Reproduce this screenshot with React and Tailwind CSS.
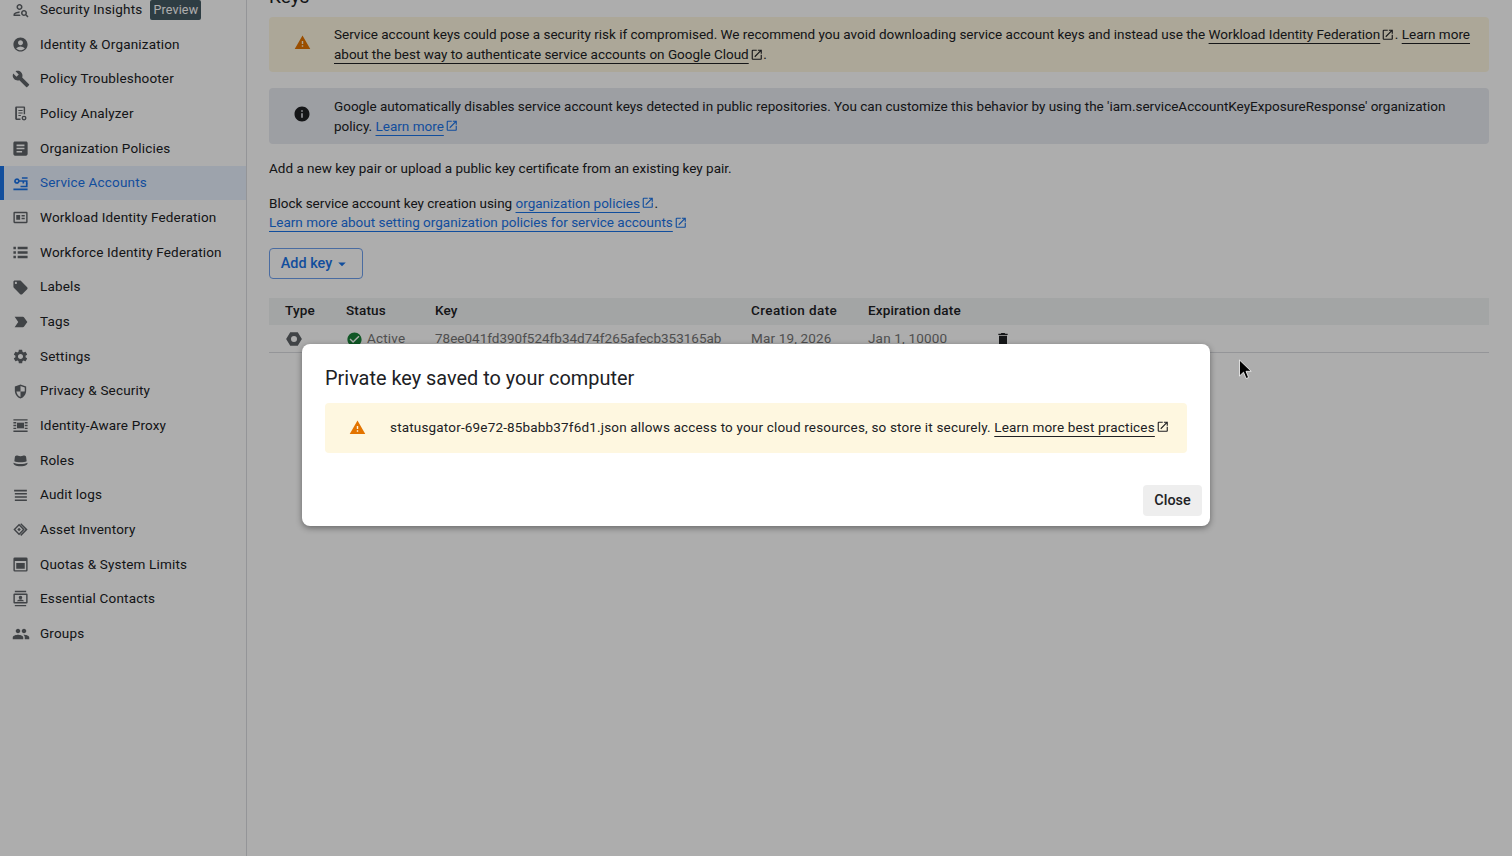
import {
  MdAccountCircle, MdBuild, MdArticle, MdLocalOffer, MdLabelImportant, MdSettings,
  MdGroup, MdWarning, MdInfo, MdOpenInNew, MdDelete, MdCheckCircle, MdArrowDropDown, MdOutlinePersonSearch,
} from 'react-icons/md'

const Svg = ({ children, className = '' }) => (
  <svg viewBox="0 0 24 24" fill="currentColor" className={className}>{children}</svg>
)

const PolicyAnalyzerIcon = (p) => (
  <Svg {...p}>
    <path d="M6 2h11a1.5 1.5 0 0 1 1.5 1.5V13h-2V4H7v15h5v2H6a1.5 1.5 0 0 1-1.5-1.5v-16A1.5 1.5 0 0 1 6 2z" />
    <path d="M9 7h6v1.6H9zM9 10.5h6v1.6H9zM9 14h3.5v1.6H9z" />
    <path d="M17 15a3.5 3.5 0 1 0 0 7 3.5 3.5 0 0 0 0-7zm0 2a1.5 1.5 0 1 1 0 3 1.5 1.5 0 0 1 0-3z" />
  </Svg>
)
const ServiceAccountsIcon = (p) => (
  <Svg {...p}>
    <path d="M7 4.500a4 4 0 0 1 3.800 2.800H22v5.700h-2.400v-3.300h-2.400v2.300h-2.400v-2.300h-4A4 4 0 1 1 7 4.500zm0 2.400a1.600 1.600 0 1 0 0 3.200 1.600 1.600 0 0 0 0-3.200z" />
    <path d="M14 3h8v2.400h-8zM19.600 12H22v5.400H12V15h7.600zM2 19h20v2.600H2z" />
  </Svg>
)
const WorkloadIcon = (p) => (
  <Svg {...p}>
    <path fillRule="evenodd" d="M3.500 4h17A1.500 1.500 0 0 1 22 5.500v13a1.500 1.500 0 0 1-1.500 1.500h-17A1.500 1.500 0 0 1 2 18.500v-13A1.500 1.500 0 0 1 3.500 4zM4 6v12h16V6z" />
    <path d="M6 8.500h5.500V15H6zM13.500 8.500H18v2h-4.500zM13.500 12.500H18v2h-4.500z" />
  </Svg>
)
const ListIcon = (p) => (
  <Svg {...p}>
    <path d="M2 4h3.500v3.500H2zM2 10.200h3.500v3.500H2zM2 16.500h3.500V20H2zM8 4h14v3.500H8zM8 10.200h14v3.500H8zM8 16.500h14V20H8z" />
  </Svg>
)
const ShieldIcon = (p) => (
  <Svg {...p}>
    <path fillRule="evenodd" d="M12 2l8 3v6c0 5-3.400 9.600-8 11-4.600-1.400-8-6-8-11V5zm0 2.200V12H6.200c.5 3.600 2.900 6.800 5.800 7.800V12h5.800c.1-.4.2-.9.200-1.300V6.400z" />
  </Svg>
)
const ProxyIcon = (p) => (
  <Svg {...p}>
    <path d="M2 3h20v2H2zM2 19h20v2H2zM2 7h4v2H2zM2 11h4v2H2zM2 15h4v2H2zM18 7h4v2h-4zM18 11h4v2h-4zM18 15h4v2h-4z" />
    <path d="M7 8h10v8H7z" />
  </Svg>
)
const HatIcon = (p) => (
  <Svg {...p}>
    <path d="M6.500 5c1.500 0 2.600.9 5.500.9S16 5 17.500 5c1.400 0 2.300 1 2.500 2.500l.7 5.500c-2 1-5 1.500-8.700 1.500S5.300 14 3.300 13l.7-5.500C4.200 6 5.100 5 6.500 5z" />
    <path d="M2 15c2.600 1.300 6 2 10 2s7.400-.7 10-2c0 3-3 5-10 5S2 18 2 15z" />
  </Svg>
)
const AuditIcon = (p) => (
  <Svg {...p}>
    <path d="M3 4h18v2.200H3zM4 8.500h17v2.200H4zM4 13h17v2.200H4zM4 17.500h17v2.200H4z" />
  </Svg>
)
const AssetIcon = (p) => (
  <Svg {...p}>
    <path d="M13 3l9 9-9 9-1.500-1.500L19 12l-6-6-1.500-1.500z" />
    <path fillRule="evenodd" d="M10 4l8 8-8 8-8-8zm0 2.800L4.800 12l5.200 5.200 5.200-5.200z" />
    <path d="M10 9.500l2.500 2.500-2.500 2.500L7.500 12z" />
  </Svg>
)
const QuotaIcon = (p) => (
  <Svg {...p}>
    <path fillRule="evenodd" d="M4 2h16a2 2 0 0 1 2 2v16a2 2 0 0 1-2 2H4a2 2 0 0 1-2-2V4a2 2 0 0 1 2-2zm0 5v13h16V7z" />
    <path d="M6 10h12v8H6zM6 3.500h2V6H6zM10 3.500h2V6h-2zM14 3.500h2V6h-2z" />
  </Svg>
)
const ContactsIcon = (p) => (
  <Svg {...p}>
    <path d="M4 1h16v2H4zM4 21h16v2H4z" />
    <path fillRule="evenodd" d="M3.500 5h17A1.500 1.500 0 0 1 22 6.500v11a1.500 1.500 0 0 1-1.500 1.500h-17A1.500 1.500 0 0 1 2 17.500v-11A1.500 1.500 0 0 1 3.500 5zM4 7v10h16V7z" />
    <path d="M12 8a2.500 2.500 0 1 1 0 5 2.500 2.500 0 0 1 0-5zM7 16c.5-1.700 2.700-2.500 5-2.500s4.500.8 5 2.500z" />
  </Svg>
)
const KeyTypeIcon = (p) => (
  <Svg {...p}>
    <path fillRule="evenodd" d="M7 3h10l5.500 9L17 21H7l-5.500-9zm5 5a4 4 0 1 0 0 8 4 4 0 0 0 0-8z" />
  </Svg>
)

const navItems = [
  { label: 'Security Insights', Icon: MdOutlinePersonSearch, badge: 'Preview', size: 'w-[18px] h-[18px]' },
  { label: 'Identity & Organization', Icon: MdAccountCircle },
  { label: 'Policy Troubleshooter', Icon: MdBuild, size: 'w-[18px] h-[18px]' },
  { label: 'Policy Analyzer', Icon: PolicyAnalyzerIcon },
  { label: 'Organization Policies', Icon: MdArticle, size: 'w-[19px] h-[19px]' },
  { label: 'Service Accounts', Icon: ServiceAccountsIcon, active: true },
  { label: 'Workload Identity Federation', Icon: WorkloadIcon },
  { label: 'Workforce Identity Federation', Icon: ListIcon },
  { label: 'Labels', Icon: MdLocalOffer },
  { label: 'Tags', Icon: MdLabelImportant, size: 'w-[18px] h-[18px]' },
  { label: 'Settings', Icon: MdSettings },
  { label: 'Privacy & Security', Icon: ShieldIcon },
  { label: 'Identity-Aware Proxy', Icon: ProxyIcon },
  { label: 'Roles', Icon: HatIcon },
  { label: 'Audit logs', Icon: AuditIcon },
  { label: 'Asset Inventory', Icon: AssetIcon },
  { label: 'Quotas & System Limits', Icon: QuotaIcon },
  { label: 'Essential Contacts', Icon: ContactsIcon },
  { label: 'Groups', Icon: MdGroup, size: 'w-[18px] h-[18px]' },
]

const Ext = ({ href = '#', dark, children }) => (
  <>
    <a
      href={href}
      className={`underline underline-offset-[4px] decoration-1 ${dark ? 'text-[#202124]' : 'text-[#1a73e8]'}`}
    >
      {children}
    </a>
    <MdOpenInNew className={`inline-block w-[13.500px] h-[13.500px] ml-[1px] align-[-2px] ${dark ? 'text-[#202124]' : 'text-[#1a73e8]'}`} />
  </>
)

const Sidebar = () => (
  <nav className="w-[247px] shrink-0 border-r border-[#dadce0] -mt-[7.500px] h-[864px] tracking-[0.17px]">
    {navItems.map(({ label, Icon, badge, active, size = 'w-[17px] h-[17px]' }) => (
      <div
        key={label}
        className={`h-[34.67px] flex items-center border-l-[4px] pl-[8px] ${
          active ? 'border-[#1a73e8] bg-[#e8f0fe] text-[#1a73e8]' : 'border-transparent text-[#202124]'
        }`}
      >
        <span className="w-[17px] shrink-0 flex justify-center">
          <Icon className={`${size} shrink-0 ${active ? 'text-[#1a73e8]' : 'text-[#5f6368]'}`} />
        </span>
        <span className="ml-[11px] whitespace-nowrap">{label}</span>
        {badge && (
          <span className="ml-[8px] h-[20px] px-[3px] flex items-center rounded-[2px] bg-[#455a64] text-white text-[12.500px]">
            {badge}
          </span>
        )}
      </div>
    ))}
  </nav>
)

const Banner = ({ className, icon, children }) => (
  <div className={`flex items-center rounded-[4px] ${className}`}>
    <div className="w-[67px] shrink-0 flex justify-center pr-[1px] -mt-[5px]">{icon}</div>
    <p className="-ml-[2px] pr-[18px] pt-[1px]">{children}</p>
  </div>
)

const KeysPanel = () => (
  <main className="flex-1 pl-[22px] pr-[23px] min-w-0 pt-[1px]">
    <h2 className="text-[19px] leading-[24px] -mt-[16px] h-[32px] text-[#202124]">Keys</h2>
    <Banner
      className="bg-[#fef7e0] h-[55px] text-[#202124]"
      icon={<MdWarning className="w-[17px] h-[17px] text-[#e37400]" />}
    >
      Service account keys could pose a security risk if compromised. We recommend you avoid downloading service
      account keys and instead use the <Ext dark>Workload Identity Federation</Ext>.{' '}
      <Ext dark>Learn more about the best way to authenticate service accounts on Google Cloud</Ext>.
    </Banner>
    <Banner
      className="bg-[#e8eaf0] h-[56px] mt-[16px] text-[#202124]"
      icon={<MdInfo className="w-[18px] h-[18px] text-[#202124]" />}
    >
      Google automatically disables service account keys detected in public repositories. You can customize this
      behavior by using the 'iam.serviceAccountKeyExposureResponse' organization policy. <Ext>Learn more</Ext>
    </Banner>
    <p className="mt-[15px] text-[#202124]">Add a new key pair or upload a public key certificate from an existing key pair.</p>
    <p className="mt-[15px] text-[#202124]">
      Block service account key creation using <Ext>organization policies</Ext>.
      <br />
      <Ext>Learn more about setting organization policies for service accounts</Ext>
    </p>
    <button className="mt-[15px] h-[31px] w-[94px] pt-[1px] flex items-center justify-center rounded-[4px] border border-[#6ea0ee] text-[#1a73e8] font-medium text-[14.400px]">
      Add key
      <MdArrowDropDown className="w-[18px] h-[18px] ml-[1px]" />
    </button>
    <table className="mt-[19px] w-full text-left tracking-[0.17px]">
      <thead>
        <tr className="h-[27px] bg-[#f1f3f4] text-[#202124]">
          <th className="font-medium pl-[16px] w-[77px]">Type</th>
          <th className="font-medium w-[89px]">Status</th>
          <th className="font-medium w-[316px]">Key</th>
          <th className="font-medium w-[117px] tracking-[0.4px]">Creation date</th>
          <th className="font-medium w-[127px]">Expiration date</th>
          <th />
        </tr>
      </thead>
      <tbody>
        <tr className="h-[28px] border-b border-[#dadce0] text-[#757575]">
          <td className="pl-[16px] pt-[1px]"><KeyTypeIcon className="w-[18px] h-[18px] text-[#5f6368]" /></td>
          <td className="pt-[1px]">
            <span className="flex items-center gap-[4px]">
              <MdCheckCircle className="w-[17px] h-[17px] text-[#188038]" />
              Active
            </span>
          </td>
          <td className="pt-[1px] tracking-normal">78ee041fd390f524fb34d74f265afecb353165ab</td>
          <td className="pt-[1px]">Mar 19, 2026</td>
          <td className="pt-[1px]">Jan 1, 10000</td>
          <td className="pt-[1px]"><MdDelete className="w-[16px] h-[16px] text-[#202124]" /></td>
        </tr>
      </tbody>
    </table>
  </main>
)

const SavedKeyDialog = () => (
  <div className="absolute inset-0 bg-black/32 flex justify-center items-start pt-[344px]">
    <div className="w-[908px] h-[182px] bg-white rounded-[8px] shadow-[0_2px_6px_rgba(0,0,0,0.4)] flex flex-col">
      <h2 className="mt-[21px] ml-[23px] text-[19.900px] leading-[28px] text-[#202124]">
        Private key saved to your computer
      </h2>
      <div className="mt-[10px] mx-[23px] h-[50px] bg-[#fef7e0] rounded-[4px] flex items-center text-[#202124] tracking-[0.17px]">
        <div className="w-[65px] shrink-0 flex justify-center -mt-[1px]">
          <MdWarning className="w-[17px] h-[17px] text-[#e37400]" />
        </div>
        <p className="whitespace-nowrap -mt-[1px]">
          statusgator-69e72-85babb37f6d1.json allows access to your cloud resources, so store it securely.{' '}
          <Ext dark>Learn more best practices</Ext>
        </p>
      </div>
      <div className="mt-auto mb-[10px] mr-[8px] flex justify-end">
        <button className="h-[31px] w-[59px] rounded-[4px] bg-[#eeeeee] text-[#202124] font-medium text-[14.400px]">Close</button>
      </div>
    </div>
  </div>
)

const Cursor = () => (
  <svg viewBox="0 0 14 22" className="absolute left-[1238px] top-[359px] w-[14px] h-[22px]">
    <path d="M1.500 1v16l4-3.800 2.600 6.300 2.500-1-2.600-6.200h5.200z" fill="#000" stroke="#fff" strokeWidth="0.8" />
  </svg>
)

const App = () => (
  <div className="relative h-screen overflow-hidden bg-white flex text-[13.500px] leading-[19.600px] font-['Roboto',sans-serif]">
    <Sidebar />
    <KeysPanel />
    <SavedKeyDialog />
    <Cursor />
  </div>
)

export default App
